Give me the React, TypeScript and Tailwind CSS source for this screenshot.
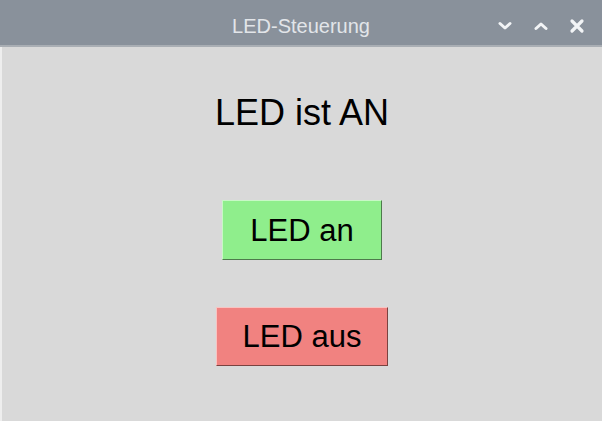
import React from "react";

function TitleButton({ children }: { children: React.ReactNode }) {
  return (
    <div className="flex h-[20px] w-[20px] items-center justify-center text-[#f2f4f6]">
      {children}
    </div>
  );
}

export default function App() {
  return (
    <div
      className="flex h-[421px] w-[602px] flex-col overflow-hidden bg-[#d9d9d9]"
      style={{ fontFamily: '"Liberation Sans", Arial, sans-serif' }}
    >
      {/* window title bar */}
      <div className="relative flex h-[47px] shrink-0 items-center justify-center border-b-2 border-[#a9aeb4] bg-[#89919b] pt-[6px]">
        <span className="text-[20px] leading-none text-[#e2e5e9]">LED-Steuerung</span>
        <div className="absolute right-[15px] top-[16px] flex items-center gap-[16px]">
          <TitleButton>
            <svg width="14" height="10" viewBox="0 0 14 10" fill="none">
              <path d="M2 2.5 L7 7 L12 2.5" stroke="currentColor" strokeWidth="3" strokeLinecap="round" strokeLinejoin="round" />
            </svg>
          </TitleButton>
          <TitleButton>
            <svg width="14" height="10" viewBox="0 0 14 10" fill="none">
              <path d="M2 7.5 L7 3 L12 7.5" stroke="currentColor" strokeWidth="3" strokeLinecap="round" strokeLinejoin="round" />
            </svg>
          </TitleButton>
          <TitleButton>
            <svg width="16" height="16" viewBox="0 0 16 16" fill="none">
              <path d="M3 3 L13 13 M13 3 L3 13" stroke="currentColor" strokeWidth="3.2" strokeLinecap="round" />
            </svg>
          </TitleButton>
        </div>
      </div>

      {/* window body */}
      <div className="flex flex-1 flex-col items-center border-l-2 border-[#eeeeee]">
        <div className="mt-[48px] text-[36px] leading-none text-black">LED ist AN</div>

        <button className="mt-[69px] flex h-[60px] w-[160px] items-center justify-center border border-t-[#c8f8c6] border-l-[#c8f8c6] border-r-[#4e7a4c] border-b-[#4e7a4c] bg-[#8fee8c] text-[31px] leading-none text-black">
          LED an
        </button>

        <button className="mt-[47px] flex h-[59px] w-[172px] items-center justify-center border border-t-[#f8c4c2] border-l-[#f8c4c2] border-r-[#7a4240] border-b-[#7a4240] bg-[#f18280] text-[31px] leading-none text-black">
          LED aus
        </button>
      </div>
    </div>
  );
}
